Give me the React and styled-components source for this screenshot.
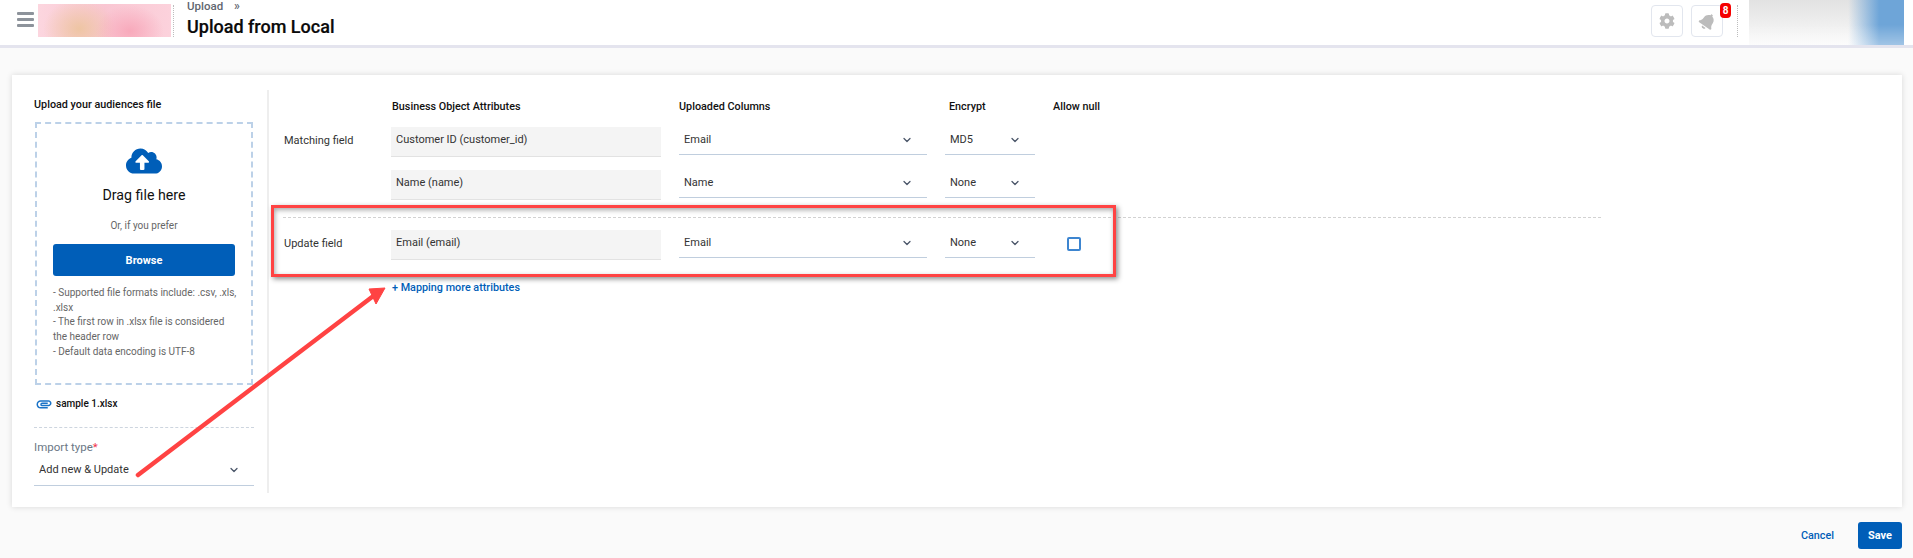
import React from 'react';
import styled, { createGlobalStyle } from 'styled-components';
import { ChevronDown } from 'lucide-react';
import { FaCog, FaBell, FaCloudUploadAlt } from 'react-icons/fa';
import { MdAttachment } from 'react-icons/md';

const GlobalStyle = createGlobalStyle`
  html, body {
    margin: 0;
    padding: 0;
    background: #fafafa;
    font-family: Roboto, "Liberation Sans", sans-serif;
    color: #1c1c1c;
  }
  * { box-sizing: border-box; }
`;

const Page = styled.div`
  position: relative;
  width: 1913px;
  height: 558px;
  overflow: hidden;
`;

const Header = styled.header`
  display: flex;
  align-items: flex-start;
  height: 48px;
  background: #fff;
  border-bottom: 3px solid #e4e4ee;
`;

const Burger = styled.div`
  display: flex;
  flex-direction: column;
  gap: 3px;
  width: 17px;
  margin: 12px 4px 0 17px;
  span {
    height: 3px;
    background: #8d939b;
    border-radius: 1px;
  }
`;

const Logo = styled.div`
  width: 133px;
  height: 33px;
  margin-top: 4px;
  background:
    radial-gradient(ellipse 34px 26px at 69% 82%, #f8a9bb 0%, rgba(248, 169, 187, 0) 100%),
    radial-gradient(ellipse 36px 30px at 31% 75%, #eec5a3 0%, rgba(238, 197, 163, 0) 100%),
    linear-gradient(90deg, #fcd6df 0%, #f9c6d2 50%, #fcd2dc 100%);
`;

const Divider = styled.div`
  width: 0;
  height: 32px;
  margin: 5px 13px 0 2px;
  border-left: 1px dotted #bdbdbd;
`;

const ActionsDivider = styled(Divider)`
  margin: 5px 11px 0 6px;
`;

const Titles = styled.div`
  flex: 1;
`;

const Crumb = styled.div`
  font-size: 11.5px;
  font-weight: 500;
  line-height: 13px;
  color: #5f6670;
  span {
    margin-left: 8px;
    font-size: 12px;
  }
`;

const Heading = styled.h1`
  margin: 2px 0 0;
  font-size: 18px;
  font-weight: 500;
  line-height: 24px;
  color: #0a0a0a;
  -webkit-text-stroke: 0.2px #0a0a0a;
`;

const IconButton = styled.div`
  position: relative;
  display: flex;
  align-items: center;
  justify-content: center;
  width: 32px;
  height: 32px;
  margin: 5px 8px 0 0;
  border: 1px solid #e2e6ee;
  border-radius: 4px;
  color: #bcbcbc;
  font-size: 16px;
`;

const Badge = styled.span`
  position: absolute;
  top: -3px;
  right: -9px;
  width: 11px;
  height: 15px;
  border-radius: 4px;
  background: #f50000;
  color: #fff;
  font-size: 10px;
  font-weight: 700;
  line-height: 15px;
  text-align: center;
`;

const TiltedBell = styled(FaBell)`
  transform: rotate(35deg);
  font-size: 17px;
`;

const Avatar = styled.div`
  width: 155px;
  height: 45px;
  margin-right: 9px;
  background:
    linear-gradient(180deg, rgba(255, 255, 255, 0) 55%, rgba(255, 255, 255, 0.35) 100%),
    linear-gradient(90deg, rgba(110, 165, 216, 0) 64%, #6ea5d8 84%, #6ea5d8 100%),
    linear-gradient(180deg, #e2e2e2 0%, #fafafa 100%);
`;

const Main = styled.main`
  padding: 27px 11px 0 12px;
`;

const Card = styled.section`
  display: flex;
  height: 432px;
  padding: 15px 0 14px 22px;
  background: #fff;
  box-shadow: 0 0 6px rgba(0, 0, 0, 0.14);
`;

const LeftColumn = styled.aside`
  display: flex;
  flex-direction: column;
  width: 235px;
  padding-right: 13px;
  border-right: 2px solid #eeeeee;
`;

const PanelTitle = styled.div`
  height: 32px;
  padding-top: 8px;
  font-size: 10.8px;
  font-weight: 500;
  line-height: 13px;
  color: #111;
`;

const DropZone = styled.div`
  display: flex;
  flex-direction: column;
  align-items: center;
  height: 263px;
  margin: 0 1px;
  padding: 19px 16px 0;
  border: 2px dashed #bcd1e8;
  color: #005eb8;
`;

const DragText = styled.div`
  margin-top: 6px;
  font-size: 14.2px;
  line-height: 20px;
  color: #111;
`;

const OrText = styled.div`
  margin-top: 15px;
  font-size: 10px;
  line-height: 12px;
  color: #666;
`;

const BrowseButton = styled.button`
  width: 182px;
  height: 32px;
  margin-top: 12px;
  border: 0;
  border-radius: 3px;
  background: #005eb8;
  color: #fff;
  font-family: inherit;
  font-size: 11px;
  font-weight: 700;
`;

const Notes = styled.div`
  align-self: flex-start;
  width: 184px;
  margin-top: 10px;
  font-size: 10px;
  line-height: 14.7px;
  color: #666;
`;

const FileRow = styled.div`
  display: flex;
  align-items: center;
  gap: 3px;
  height: 43px;
  padding: 0 0 5px 1px;
  border-bottom: 1px dashed #cdd5df;
  color: #1a73c7;
  font-size: 18px;
  span {
    color: #111;
    font-size: 10px;
    font-weight: 500;
  }
`;

const FieldLabel = styled.div`
  margin-top: 12px;
  font-size: 11.5px;
  line-height: 14px;
  color: #6b7785;
  em {
    color: #f0324b;
    font-style: normal;
  }
`;

const Select = styled.div`
  display: flex;
  align-items: center;
  justify-content: space-between;
  align-self: start;
  height: ${(p) => p.$height || 28}px;
  padding: 0 14px 2px 5px;
  border-bottom: 1px solid #c0cede;
  font-size: 11px;
  color: #333;
  svg {
    color: #4a5568;
  }
`;

const ImportSelect = styled(Select)`
  align-self: stretch;
  margin-top: 2px;
`;

const RightColumn = styled.div`
  flex: 1;
  padding-left: 15px;
`;

const Row = styled.div`
  display: grid;
  grid-template-columns: 89px 270px 248px 90px 60px;
  column-gap: 18px;
  align-items: center;
  height: ${(p) => p.$height}px;
  margin-bottom: ${(p) => p.$gap || 0}px;
`;

const ColumnTitle = styled.div`
  padding: 0 0 4px ${(p) => p.$indent || 0}px;
  font-size: 10.8px;
  font-weight: 500;
  color: #111;
`;

const RowLabel = styled.div`
  padding-bottom: 3px;
  font-size: 11px;
  color: #333;
`;

const ReadOnlyField = styled.div`
  height: 30px;
  padding: 0 5px 5px;
  display: flex;
  align-items: center;
  background: #f4f4f4;
  border-bottom: 1px solid #e2e2e2;
  font-size: 11px;
  color: #333;
`;

const SectionLine = styled.div`
  width: 1318px;
  height: 0;
  margin: 17px 0 12px -1px;
  border-top: 1px dashed #d2d2d2;
`;

const Checkbox = styled.div`
  width: 14px;
  height: 14px;
  margin: 0 0 3px 14px;
  border: 2px solid #3d85d0;
  border-radius: 2px;
`;

const MappingLink = styled.div`
  margin: 21px 0 0 108px;
  font-size: 10.8px;
  font-weight: 500;
  line-height: 14px;
  color: #005eb8;
`;

const Footer = styled.footer`
  display: flex;
  justify-content: flex-end;
  align-items: center;
  gap: 24px;
  padding-top: 15px;
`;

const CancelLink = styled.div`
  font-size: 10.8px;
  font-weight: 500;
  color: #005eb8;
`;

const SaveButton = styled.button`
  width: 44px;
  height: 27px;
  border: 0;
  border-radius: 3px;
  background: #005eb8;
  color: #fff;
  font-family: inherit;
  font-size: 11px;
  font-weight: 700;
`;

// the red annotations drawn on top of the screenshot
const Highlight = styled.div`
  position: absolute;
  left: 271px;
  top: 205px;
  width: 845px;
  height: 72px;
  border: 3px solid #ff4343;
  box-shadow: 2px 2px 5px rgba(0, 0, 0, 0.45), inset 1px 2px 5px rgba(0, 0, 0, 0.35);
`;

const ArrowLayer = styled.svg`
  position: absolute;
  left: 0;
  top: 0;
  pointer-events: none;
`;

const chevron = <ChevronDown size={12} strokeWidth={2.5} />;

export default function App() {
  return (
    <Page>
      <GlobalStyle />
      <Header>
        <Burger>
          <span />
          <span />
          <span />
        </Burger>
        <Logo />
        <Divider />
        <Titles>
          <Crumb>
            Upload <span>»</span>
          </Crumb>
          <Heading>Upload from Local</Heading>
        </Titles>
        <IconButton>
          <FaCog />
        </IconButton>
        <IconButton>
          <TiltedBell />
          <Badge>8</Badge>
        </IconButton>
        <ActionsDivider />
        <Avatar />
      </Header>

      <Main>
        <Card>
          <LeftColumn>
            <PanelTitle>Upload your audiences file</PanelTitle>
            <DropZone>
              <FaCloudUploadAlt size={36} />
              <DragText>Drag file here</DragText>
              <OrText>Or, if you prefer</OrText>
              <BrowseButton>Browse</BrowseButton>
              <Notes>
                - Supported file formats include: .csv, .xls, .xlsx
                <br />
                - The first row in .xlsx file is considered the header row
                <br />
                - Default data encoding is UTF-8
              </Notes>
            </DropZone>
            <FileRow>
              <MdAttachment />
              <span>sample 1.xlsx</span>
            </FileRow>
            <FieldLabel>
              Import type<em>*</em>
            </FieldLabel>
            <ImportSelect $height={30}>
              Add new &amp; Update
              {chevron}
            </ImportSelect>
          </LeftColumn>

          <RightColumn>
            <Row $height={37}>
              <span />
              <ColumnTitle $indent={1}>Business Object Attributes</ColumnTitle>
              <ColumnTitle>Uploaded Columns</ColumnTitle>
              <ColumnTitle $indent={4}>Encrypt</ColumnTitle>
              <ColumnTitle>Allow null</ColumnTitle>
            </Row>
            <Row $height={30} $gap={13}>
              <RowLabel>Matching field</RowLabel>
              <ReadOnlyField>Customer ID (customer_id)</ReadOnlyField>
              <Select>Email{chevron}</Select>
              <Select>MD5{chevron}</Select>
            </Row>
            <Row $height={30}>
              <span />
              <ReadOnlyField>Name (name)</ReadOnlyField>
              <Select>Name{chevron}</Select>
              <Select>None{chevron}</Select>
            </Row>
            <SectionLine />
            <Row $height={30}>
              <RowLabel>Update field</RowLabel>
              <ReadOnlyField>Email (email)</ReadOnlyField>
              <Select>Email{chevron}</Select>
              <Select>None{chevron}</Select>
              <Checkbox />
            </Row>
            <MappingLink>+ Mapping more attributes</MappingLink>
          </RightColumn>
        </Card>
        <Footer>
          <CancelLink>Cancel</CancelLink>
          <SaveButton>Save</SaveButton>
        </Footer>
      </Main>

      <Highlight />
      <ArrowLayer width="1913" height="558" viewBox="0 0 1913 558">
        <line x1="138" y1="475" x2="372" y2="297" stroke="#ff4343" strokeWidth="4.5" strokeLinecap="round" />
        <polygon points="385,288 369,289 376,304" fill="#ff4343" stroke="#ff4343" strokeWidth="1" />
      </ArrowLayer>
    </Page>
  );
}
